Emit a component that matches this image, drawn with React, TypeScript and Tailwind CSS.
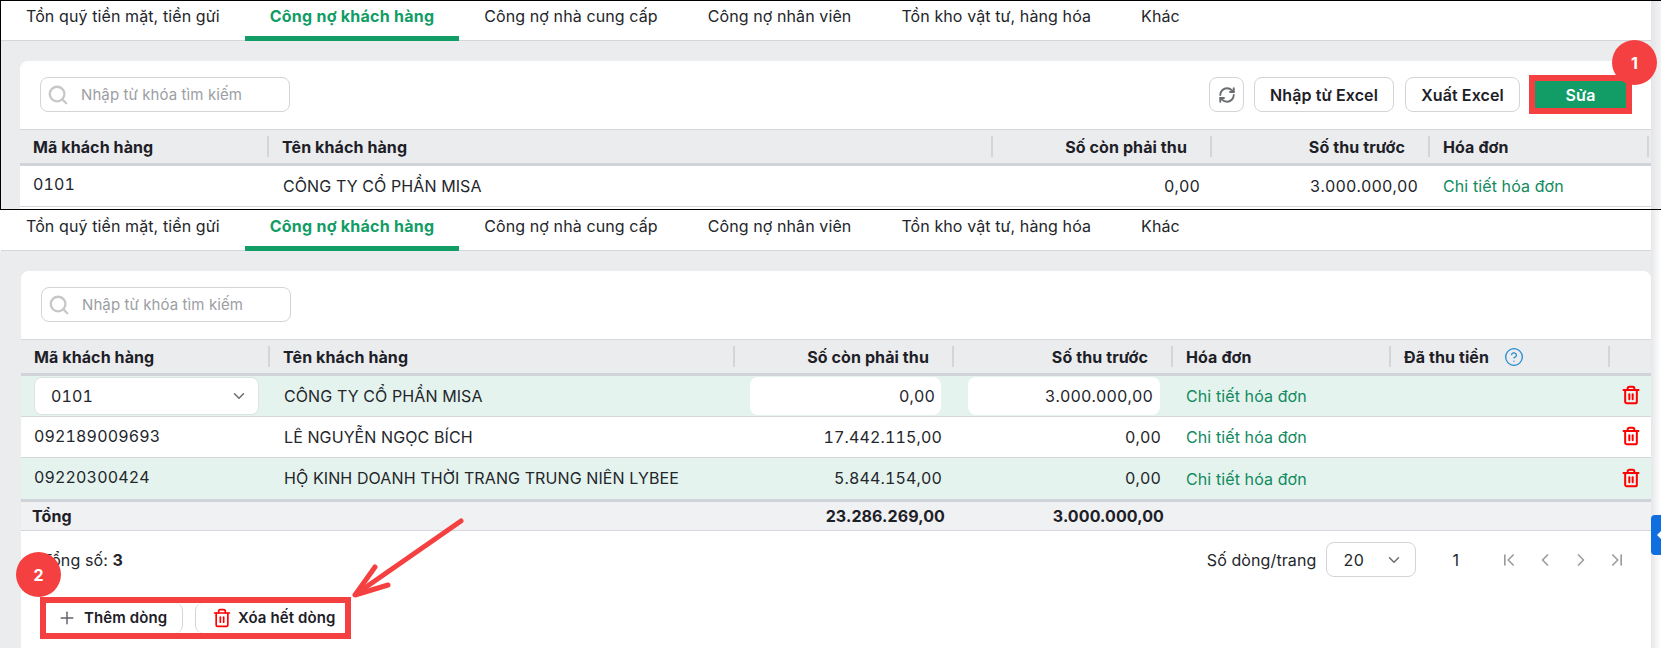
import {
  ChevronDown,
  ChevronFirst,
  ChevronLast,
  ChevronLeft,
  ChevronRight,
  CircleHelp,
  Plus,
  RefreshCw,
  Search,
  Trash2,
} from "lucide-react";

const tabs = [
  "Tồn quỹ tiền mặt, tiền gửi",
  "Công nợ khách hàng",
  "Công nợ nhà cung cấp",
  "Công nợ nhân viên",
  "Tồn kho vật tư, hàng hóa",
  "Khác",
];

function Tabs({ rowClass, textClass }: { rowClass: string; textClass: string }) {
  return (
    <div className={`flex bg-white shadow-[inset_0_-1px_0_#d5d7db] ${rowClass}`}>
      {tabs.map((tab, index) => (
        <div
          key={tab}
          className={`border-b-[5px] px-[25px] text-[16px] ${textClass} ${
            index === 1
              ? "border-[#129c66] font-bold tracking-[0.25px] text-[#129c66]"
              : "border-transparent text-[#23262b]"
          }`}
        >
          {tab}
        </div>
      ))}
    </div>
  );
}

function SearchBox() {
  return (
    <div className="flex h-[35px] w-[250px] items-center rounded-lg border border-[#d2d4d8] bg-white pl-[6px]">
      <Search size={22} strokeWidth={2.5} className="text-[#c6c7c9]" />
      <span className="ml-[12px] pt-[2px] text-[15px] text-[#9b9ea3]">Nhập từ khóa tìm kiếm</span>
    </div>
  );
}

function HeadCell({
  label,
  right,
  noLine,
}: {
  label?: React.ReactNode;
  right?: boolean;
  noLine?: boolean;
}) {
  return (
    <div className="flex h-full items-center">
      <div
        className={`flex-1 text-[16px] font-bold text-[#1d2027] ${
          right ? "pr-[23px] text-right" : "pl-[13px]"
        }`}
      >
        {label}
      </div>
      {!noLine && <div className="h-[21px] w-[2px] bg-[#d3d5d9]" />}
    </div>
  );
}

function RowTrash() {
  return (
    <div className="flex justify-end pb-[2px] pr-[10px]">
      <Trash2 size={20} strokeWidth={2.4} className="text-[#ff0000]" />
    </div>
  );
}

function InvoiceLink() {
  return <div className="pl-[13px] text-[16px] text-[#118a5e]">Chi tiết hóa đơn</div>;
}

function Num({ value, bold }: { value: string; bold?: boolean }) {
  return (
    <div
      className={`text-right text-[16px] ${
        bold ? "pr-[9px] font-bold" : "pb-[1px] pr-[12px] tracking-[0.15px] tabular-nums"
      }`}
    >
      {value}
    </div>
  );
}

function TopPanel() {
  return (
    <div className="flex h-[210px] border-y border-l border-black">
      <div className="flex min-w-0 flex-1 flex-col bg-[#ebecee]">
        <Tabs rowClass="h-[40px]" textClass="leading-[30px]" />
        <div className="ml-[19px] mt-[20px] flex-1 rounded-t-lg bg-white">
          <div className="flex h-[68px] items-start justify-between pl-[20px] pr-[25px] pt-[16px]">
            <SearchBox />
            <div className="flex h-[35px] items-center">
              <button className="flex h-[35px] w-[35px] items-center justify-center rounded-lg border border-[#d2d4d8] text-[#6a6d72]">
                <RefreshCw size={18} strokeWidth={2.5} />
              </button>
              <button className="ml-[10px] h-[35px] w-[140px] rounded-lg border border-[#d2d4d8] text-[16px] font-semibold text-[#1d2027]">
                Nhập từ Excel
              </button>
              <button className="ml-[11px] h-[35px] w-[115px] rounded-lg border border-[#d2d4d8] text-[16px] font-semibold text-[#1d2027]">
                Xuất Excel
              </button>
              <button className="ml-[15px] h-[27px] w-[91px] bg-[#129c66] text-[16px] font-semibold text-white outline-[6px] outline-[#f44040]">
                Sửa
              </button>
            </div>
          </div>
          <div className="grid h-[37px] grid-cols-[249px_724px_219px_218px_219px] border-b-[3px] border-t border-b-[#d0d3d8] border-t-[#d5d7db] bg-[#ebecee]">
            <HeadCell label="Mã khách hàng" />
            <HeadCell label="Tên khách hàng" />
            <HeadCell label="Số còn phải thu" right />
            <HeadCell label="Số thu trước" right />
            <HeadCell label="Hóa đơn" />
          </div>
          <div className="grid h-[41px] grid-cols-[249px_724px_219px_218px_219px] items-center border-b border-[#d5d7db] text-[#23262b]">
            <div className="pb-[5px] pl-[13px] text-[16px] tracking-[0.15px] tabular-nums">0101</div>
            <div className="pb-[1px] pl-[14px] text-[16px]">CÔNG TY CỔ PHẦN MISA</div>
            <Num value="0,00" />
            <Num value="3.000.000,00" />
            <InvoiceLink />
          </div>
        </div>
      </div>
      <div className="w-[10px] bg-gradient-to-r from-[#e4e5e7] to-[#f3f3f4]" />
    </div>
  );
}

const bodyCols = "grid grid-cols-[249px_465px_219px_219px_218px_219px_41px]";

function BottomPanel() {
  return (
    <div className="flex h-[438px]">
      <div className="flex min-w-0 flex-1 flex-col bg-[#ebecee]">
        <div className="pl-[1px] bg-white">
          <Tabs rowClass="h-[41px]" textClass="leading-[32px]" />
        </div>
        <div className="ml-[21px] mt-[20px] flex-1 rounded-t-lg bg-white">
          <div className="h-[68px] pl-[20px] pt-[16px]">
            <SearchBox />
          </div>
          <div className={`${bodyCols} h-[37px] border-b-[3px] border-t border-b-[#d0d3d8] border-t-[#d5d7db] bg-[#ebecee]`}>
            <HeadCell label="Mã khách hàng" />
            <HeadCell label="Tên khách hàng" />
            <HeadCell label="Số còn phải thu" right />
            <HeadCell label="Số thu trước" right />
            <HeadCell label="Hóa đơn" />
            <HeadCell
              label={
                <span className="flex items-center">
                  Đã thu tiền
                  <CircleHelp size={20} strokeWidth={1.5} className="ml-[15px] text-[#1f88d0]" />
                </span>
              }
            />
            <HeadCell noLine />
          </div>

          <div className={`${bodyCols} h-[41px] items-center border-b border-[#d5d7db] bg-[#e5f3ee] text-[#23262b]`}>
            <div className="pl-[13px]">
              <div className="flex h-[38px] w-[225px] items-center justify-between rounded-lg border border-[#dfe3e2] bg-white pl-[16px] pr-[10px] text-[16px] tracking-[0.15px] tabular-nums">
                0101
                <ChevronDown size={18} className="text-[#6a6d72]" />
              </div>
            </div>
            <div className="pb-[1px] pl-[14px] text-[16px]">CÔNG TY CỔ PHẦN MISA</div>
            <div className="ml-[15px] flex h-[38px] w-[191px] items-center justify-end rounded-lg bg-white pr-[6px] text-[16px] tracking-[0.15px] tabular-nums">0,00</div>
            <div className="ml-[14px] flex h-[38px] w-[192px] items-center justify-end rounded-lg bg-white pr-[7px] text-[16px] tracking-[0.15px] tabular-nums">3.000.000,00</div>
            <InvoiceLink />
            <div />
            <RowTrash />
          </div>

          <div className={`${bodyCols} h-[41px] items-center border-b border-[#d5d7db] text-[#23262b]`}>
            <div className="pb-[3px] pl-[13px] text-[16px] tracking-[0.15px] tabular-nums">092189009693</div>
            <div className="pb-[1px] pl-[14px] text-[16px]">LÊ NGUYỄN NGỌC BÍCH</div>
            <Num value="17.442.115,00" />
            <Num value="0,00" />
            <InvoiceLink />
            <div />
            <RowTrash />
          </div>

          <div className={`${bodyCols} h-[44px] items-center border-b-[3px] border-[#d0d3d8] bg-[#e5f3ee] text-[#23262b]`}>
            <div className="pb-[3px] pl-[13px] text-[16px] tracking-[0.15px] tabular-nums">09220300424</div>
            <div className="pb-[1px] pl-[14px] text-[16px]">HỘ KINH DOANH THỜI TRANG TRUNG NIÊN LYBEE</div>
            <Num value="5.844.154,00" />
            <Num value="0,00" />
            <InvoiceLink />
            <div />
            <RowTrash />
          </div>

          <div className={`${bodyCols} h-[29px] items-center border-b border-[#d5d7db] bg-[#f0f1f3] text-[#1d2027]`}>
            <div className="pl-[11px] text-[16px] font-bold">Tổng</div>
            <div />
            <Num value="23.286.269,00" bold />
            <Num value="3.000.000,00" bold />
          </div>

          <div className="mt-[11px] flex h-[35px] items-center justify-between pl-[21px] pr-[24px] text-[16px] text-[#23262b]">
            <div>
              Tổng số: <b>3</b>
            </div>
            <div className="flex items-center">
              <span>Số dòng/trang</span>
              <div className="ml-[10px] flex h-[35px] w-[90px] items-center justify-between rounded-lg border border-[#d2d4d8] pl-[16px] pr-[12px] text-[16px] tracking-[0.5px]">
                20
                <ChevronDown size={18} className="text-[#6a6d72]" />
              </div>
              <span className="ml-[36px] text-[16px]">1</span>
              <div className="ml-[40px] flex gap-[16px] text-[#9a9ca0]">
                <ChevronFirst size={20} />
                <ChevronLeft size={20} />
                <ChevronRight size={20} />
                <ChevronLast size={20} />
              </div>
            </div>
          </div>

          <div className="ml-[19px] mt-[20px] flex h-[42px] w-[311px] gap-[12px] overflow-hidden border-[6px] border-[#f44040] text-[15px] font-semibold text-[#1d2027]">
            <button className="flex h-[30px] w-[137px] items-center rounded-r-lg border-r border-[#d2d4d8] pl-[11px]">
              <Plus size={20} strokeWidth={1.75} className="text-[#5f6368]" />
              <span className="ml-[7px]">Thêm dòng</span>
            </button>
            <button className="flex h-[30px] flex-1 items-center rounded-l-lg border-l border-[#d2d4d8] pl-[16px]">
              <Trash2 size={20} strokeWidth={2} className="text-[#ff0000]" />
              <span className="ml-[6px]">Xóa hết dòng</span>
            </button>
          </div>
        </div>
      </div>
      <div className="w-[10px] bg-gradient-to-r from-[#e6e7e9] to-white" />
    </div>
  );
}

export default function App() {
  return (
    <div className="relative h-[648px] w-[1661px] overflow-hidden bg-white font-['Inter',sans-serif] tracking-[0.1px]">
      <TopPanel />
      <BottomPanel />

      {/* Annotations */}
      <div className="absolute left-[1612px] top-[40px] flex h-[45px] w-[45px] items-center justify-center rounded-full bg-[#f44040] text-[16px] font-bold text-white">
        1
      </div>
      <div className="absolute left-[16px] top-[552px] flex h-[45px] w-[45px] items-center justify-center rounded-full bg-[#f44040] text-[16px] font-bold text-white">
        2
      </div>
      <svg className="absolute left-0 top-0 h-[648px] w-[1661px]" fill="none" stroke="#f44040" strokeWidth="5" strokeLinecap="round" strokeLinejoin="round">
        <path d="M461 521 L356 594" />
        <path d="M375 567 L355 595 L388 585" />
      </svg>

      {/* Blue side handle */}
      <div className="absolute left-[1651px] top-[515px] flex h-[40px] w-[10px] items-center justify-end rounded-l bg-[#0f6fde]">
        <svg width="4" height="8" viewBox="0 0 4 8" className="fill-white">
          <path d="M0 4 L4 0 V8 Z" />
        </svg>
      </div>
    </div>
  );
}
